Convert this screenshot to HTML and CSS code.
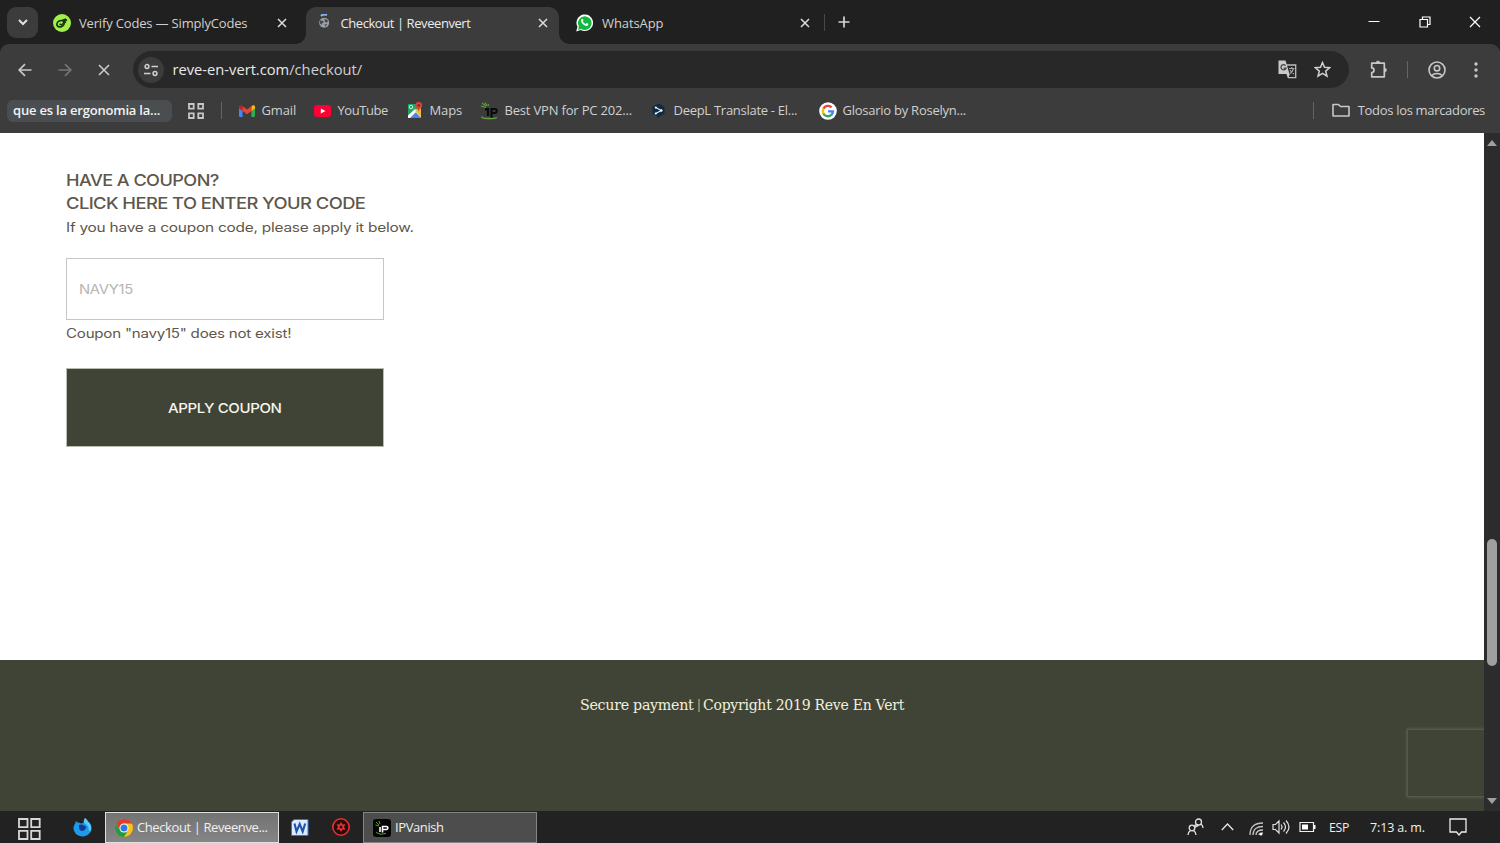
FILE: index.html
```
<!DOCTYPE html>
<html lang="es">
<head>
  <meta charset="UTF-8">
  <title>Checkout | Reveenvert</title>
  <link rel="stylesheet" href="styles.css">
</head>
<body>
  <div class="screen">

    <div class="tab-strip">
      <button class="tab-search">
        <svg width="12" height="12" viewBox="0 0 12 12"><path d="M2 4l4 4 4-4" fill="none" stroke="#e3e3e3" stroke-width="2"/></svg>
      </button>
      <div class="tab">
        <svg class="tab-icon" viewBox="0 0 18 18"><circle cx="9" cy="9" r="9" fill="#a4f04b"/><ellipse cx="7.5" cy="9.8" rx="3.8" ry="3" transform="rotate(-25 7.5 9.8)" fill="none" stroke="#17330d" stroke-width="1.7"/><path d="M6.5 10l2 1L14 5.5M9 6.5l4-1.5M10 9l3-1" fill="none" stroke="#17330d" stroke-width="1.4"/></svg>
        <span class="tab-title"><span class="t-verify">Verify Codes — SimplyCodes</span></span>
        <svg class="tab-close" viewBox="0 0 10 10"><path d="M1 1l8 8M9 1l-8 8"/></svg>
      </div>
      <div class="tab active">
        <svg class="tab-icon" viewBox="0 0 18 18"><path d="M5.8 1.800Q9-.3 12 1" fill="none" stroke="#8ab4f8" stroke-width="2"/><circle cx="9.200" cy="8.700" r="5" fill="#9aa0a6"/><path d="M5 6.500l3 .2.7 1.700-2 1 .3 1.600-2-1.600zM9.500 4.500l3.500 2-1 2.200-2.200-1zM9.300 10.500l3-.6-1.800 2.700z" fill="#45494d"/></svg>
        <span class="tab-title"><span class="t-checkout">Checkout | Reveenvert</span></span>
        <svg class="tab-close" viewBox="0 0 10 10"><path d="M1 1l8 8M9 1l-8 8"/></svg>
      </div>
      <div class="tab">
        <svg class="tab-icon" viewBox="0 0 18 18"><path d="M.2 17.500L1.500 12.800A8.300 8.300 0 1 1 4.700 16z" fill="#fff"/><path d="M2 15.700l.9-3.100A6.800 6.800 0 1 1 5.300 15z" fill="#12b83f"/><path d="M5.500 5.200c.5-.7 1.200-.7 1.500 0l.5 1.300-.7 1c.7 1.300 1.600 2 2.800 2.500l.9-1 1.700.8c.4.3 0 1.500-.7 1.900-1.200.6-3 0-4.700-1.700C5.100 8.200 4.700 6.500 5.500 5.200z" fill="#fff"/></svg>
        <span class="tab-title"><span class="t-whats">WhatsApp</span></span>
        <svg class="tab-close" viewBox="0 0 10 10"><path d="M1 1l8 8M9 1l-8 8"/></svg>
      </div>
      <span class="tab-divider"></span>
      <svg class="new-tab" width="12" height="12" viewBox="0 0 12 12"><path d="M6 .5v11M.5 6h11" stroke="#d5d5d5" stroke-width="1.7"/></svg>
      <div class="window-buttons">
        <svg width="12" height="12" viewBox="0 0 12 12"><path d="M.5 5.500h11" stroke="#fff"/></svg>
        <svg width="12" height="12" viewBox="0 0 12 12"><path d="M1 3.500h7.500V11H1zM3.500 3V1H11v7.500H9" fill="none" stroke="#fff" stroke-width="1.200"/></svg>
        <svg width="12" height="12" viewBox="0 0 12 12"><path d="M1 1l10 10M11 1L1 11" stroke="#fff" stroke-width="1.200"/></svg>
      </div>
    </div>

    <div class="chrome-bars">
      <div class="toolbar">
        <svg class="nav-icon" viewBox="0 0 14 14"><path d="M13.500 7H1.500M7 1.200L1.200 7 7 12.800" stroke="#c7c7c7"/></svg>
        <svg class="nav-icon" viewBox="0 0 14 14"><path d="M.5 7h12M7 1.200L12.800 7 7 12.800" stroke="#757575"/></svg>
        <svg class="nav-icon" viewBox="0 0 14 14"><path d="M2 2l10 10M12 2L2 12" stroke="#c7c7c7"/></svg>
        <div class="address-bar">
          <span class="site-info">
            <svg width="16" height="16" viewBox="0 0 16 16"><path d="M8.500 4.500H15M1 11.500h6.500" stroke="#d0d0d0" stroke-width="1.600"/><circle cx="4" cy="4.500" r="1.900" fill="none" stroke="#d0d0d0" stroke-width="1.500"/><circle cx="12" cy="11.500" r="1.900" fill="none" stroke="#d0d0d0" stroke-width="1.500"/></svg>
          </span>
          <span class="url">reve-en-vert.com<span class="path">/checkout/</span></span>
          <svg class="translate" width="19" height="19" viewBox="0 0 19 19"><path d="M8 5h9.700v12.700H10.500L9 14" fill="none" stroke="#bdbdbd" stroke-width="1.300"/><path d="M.5.500h7l4 13.500h-11z" fill="#c9c9c9"/><path d="M9 14h3l-2 4z" fill="#c9c9c9"/><path d="M7.600 5.600A2.600 2.600 0 1 0 8 8.200H5.700" fill="none" stroke="#444" stroke-width="1.300"/><path d="M11 8.500h5.500M13.700 7v1.500M15.500 8.500c-.5 2-2 4-3.500 5M12 10c1 2 2.500 3 4 4" fill="none" stroke="#aaa" stroke-width="1.100"/></svg>
          <svg width="17" height="17" viewBox="0 0 17 17"><path d="M8.500 1.500l2 4.800 5.200.4-4 3.400 1.300 5.100-4.500-2.800L4 15.200l1.300-5.100-4-3.400 5.200-.4z" fill="none" stroke="#d0d0d0" stroke-width="1.500"/></svg>
        </div>
        <svg class="puzzle" width="18" height="19" viewBox="0 0 18 19"><path d="M1.700 3.200h12.600v13.600H1.700v-4.300a2.200 2.200 0 0 0 0-4.600z" fill="none" stroke="#c7c7c7" stroke-width="1.700" stroke-linejoin="round"/><path d="M6 3a2 2 0 0 1 4 0zM14.500 8a2 2 0 0 1 0 4z" fill="#c7c7c7" stroke="#c7c7c7" stroke-width=".6"/></svg>
        <span class="divider"></span>
        <svg class="profile" width="18" height="18" viewBox="0 0 18 18" fill="none" stroke="#c7c7c7" stroke-width="1.600"><circle cx="9" cy="9" r="8"/><circle cx="9" cy="7.200" r="2.700"/><path d="M3.600 14.500c3-2.700 7.800-2.700 10.800 0"/></svg>
        <svg class="menu-dots" width="4" height="16" viewBox="0 0 4 16" fill="#c7c7c7"><circle cx="2" cy="2" r="1.700"/><circle cx="2" cy="8" r="1.700"/><circle cx="2" cy="14" r="1.700"/></svg>
      </div>

      <div class="bookmarks">
        <span class="group-chip"><span class="t-group">que es la ergonomia la...</span></span>
        <svg class="apps" width="16" height="16" viewBox="0 0 16 16" fill="none" stroke="#c7c7c7" stroke-width="1.800"><path d="M1 1h4.700v4.700H1zM10.300 1H15v4.700h-4.700zM1 10.300h4.700V15H1zM10.300 10.300H15V15h-4.700z"/></svg>
        <span class="divider first"></span>
        <div class="bookmark b-gmail">
          <svg width="16" height="12" viewBox="0 0 16 12"><path d="M0 1.500L3.600 4v8H1.200Q0 12 0 11z" fill="#4285f4"/><path d="M12.400 4L16 1.500V11q0 1-1.200 1h-2.400z" fill="#34a853"/><path d="M12.400 1.200Q14 0 15.300.4 16 .7 16 2v1.500L12.400 6z" fill="#fbbc04"/><path d="M0 2Q0 .6.900.3 2 0 3.600 1.200V6L0 3.500z" fill="#c5221f"/><path d="M3.600 1.200L8 4.500l4.400-3.300V6L8 9.200 3.600 6z" fill="#ea4335"/></svg>
          <span>Gmail</span>
        </div>
        <div class="bookmark b-youtube">
          <svg width="17" height="12" viewBox="0 0 17 12"><rect width="17" height="12" rx="3" fill="#ff0033"/><path d="M6.800 3.500L11.500 6 6.800 8.500z" fill="#fff"/></svg>
          <span>YouTube</span>
        </div>
        <div class="bookmark b-maps">
          <svg width="16" height="17" viewBox="0 0 16 17"><rect x="1" y="2" width="13" height="14" rx="1" fill="#e6e9ea"/><path d="M1 2h10L1 13z" fill="#1fa463"/><path d="M1 15.500L7.500 9l6.500 7H1z" fill="#4c83e8"/><path d="M1 12.500L11 2l2 2L2 15H1z" fill="#1fa463"/><path d="M1 13.500L8 7l2 2L3 16H1z" fill="#fff"/><path d="M14 6v9L8 9z" fill="#e8bd3b"/><circle cx="4" cy="5" r="1.700" fill="none" stroke="#fff" stroke-width=".8"/><path d="M11.700 0a3.400 3.400 0 0 1 3.400 3.400c0 2.200-2.600 3.200-3.400 6-.8-2.800-3.400-3.800-3.400-6A3.400 3.400 0 0 1 11.700 0z" fill="#db4437"/><circle cx="11.700" cy="3.400" r="1.200" fill="#7b231c"/></svg>
          <span>Maps</span>
        </div>
        <div class="bookmark b-vpn">
          <svg width="17" height="18" viewBox="0 0 17 18"><path d="M1 1l4 3M4 .5l2 3M0 4l5 1.500M7.500 2l-.5 2" stroke="#5d9d38" stroke-width="1.200"/><path d="M7 7v7M10.500 15.500V7H14q2 0 1.700 2.500-.3 1.500-2 1.500h-3" fill="none" stroke="#090b09" stroke-width="2.200"/><path d="M4 6h4v2.500H4z" fill="#090b09"/><path d="M.5 14.500q.8 2.200 7 2 6 .5 8.500-1" fill="none" stroke="#65a243" stroke-width="1.300"/></svg>
          <span>Best VPN for PC 202...</span>
        </div>
        <div class="bookmark b-deepl">
          <svg width="13" height="16" viewBox="0 0 13 16"><path d="M6.500.5l6 3.300v7L6.500 14v2L4.800 13 .5 10.800v-7z" fill="#0f2b46"/><path d="M3.700 4.500l5.600 3-5.600 3" fill="none" stroke="#e8edf0" stroke-width="1.100"/><circle cx="3.800" cy="4.500" r="1.100" fill="#fff"/><circle cx="9.300" cy="7.500" r="1.200" fill="#fff"/><circle cx="3.800" cy="10.500" r="1.100" fill="#fff"/></svg>
          <span>DeepL Translate - El...</span>
        </div>
        <div class="bookmark b-google">
          <svg width="18" height="18" viewBox="0 0 18 18"><circle cx="9" cy="9" r="8.800" fill="#fff"/><g fill="none" stroke-width="2.300"><path d="M12.600 5.300A5.200 5.200 0 0 0 4.400 6.600" stroke="#ea4335"/><path d="M4.400 6.500a5.300 5.300 0 0 0 0 5" stroke="#fbbc05"/><path d="M4.300 11.400a5.200 5.200 0 0 0 8.100 1.500" stroke="#34a853"/><path d="M12.200 13A5 5 0 0 0 14 9.300H9" stroke="#4285f4"/></g></svg>
          <span>Glosario by Roselyn...</span>
        </div>
        <div class="all-bookmarks">
          <span class="divider"></span>
          <svg width="18" height="15" viewBox="0 0 18 15"><path d="M1 1.500h5.500l2 2H17V13H1z" fill="none" stroke="#c7c7c7" stroke-width="1.600" stroke-linejoin="round"/></svg>
          <span class="t-all">Todos los marcadores</span>
        </div>
      </div>
    </div>

    <div class="viewport">
      <div class="page">
        <div class="coupon">
          <h3><span class="t-have">HAVE A COUPON?</span></h3>
          <h3><span class="t-click">CLICK HERE TO ENTER YOUR CODE</span></h3>
          <p class="hint"><span class="t-hint">If you have a coupon code, please apply it below.</span></p>
          <div class="coupon-input"><span class="t-navy">NAVY15</span></div>
          <p class="error"><span class="t-error">Coupon "navy15" does not exist!</span></p>
          <button class="apply"><span class="t-apply">APPLY COUPON</span></button>
        </div>
        <footer class="footer">
          <p><span class="t-secure">Secure payment</span><span class="bar"></span><span class="t-copy">Copyright 2019 Reve En Vert</span></p>
          <div class="recaptcha"></div>
        </footer>
      </div>
      <div class="scrollbar">
        <span class="arrow up"></span>
        <span class="thumb"></span>
        <span class="arrow down"></span>
      </div>
    </div>

    <div class="taskbar">
      <svg class="start" width="23" height="22" viewBox="0 0 23 22" fill="none" stroke="#d8d8d8" stroke-width="1.800"><path d="M1 1h8.500v8.200H1zM13.200 1h8.500v8.200h-8.500zM1 12.800h8.500V21H1zM13.200 12.800h8.500V21h-8.500z"/></svg>
      <svg class="firefox" width="19" height="19" viewBox="0 0 19 19"><path d="M12 0q2 1 3 3.500 3.800 3 3.500 7.500A9 8.300 0 1 1 2.500 5l.3-2 2 1.500q2 0 3 1l2.700-.5q-.3-3 1.500-5z" fill="#1b9bea"/><path d="M12 0q2 1 3 3.500 4 3.500 3 8-1 2-2 1.500 0-6-5-8-.5-3 1-5z" fill="#5bcaf8"/><path d="M6 7q3-1 5 .5l2.500 1.500q-1 3-4 4-4 0-3.500-6z" fill="#143b92"/></svg>
      <div class="task current">
        <svg width="18" height="18" viewBox="0 0 18 18"><circle cx="9" cy="9" r="9" fill="#fbc116"/><path d="M1.200 4.500A9 9 0 0 1 16.800 4.500H9L5.100 11.300z" fill="#e33b2e"/><path d="M1.200 4.500A9 9 0 0 0 9 18l4-6.800H5.100z" fill="#229b49"/><circle cx="9" cy="9" r="4.500" fill="#fff"/><circle cx="9" cy="9" r="3.500" fill="#3478df"/></svg>
        <span class="t-task">Checkout | Reveenve...</span>
      </div>
      <svg class="word" width="18" height="17" viewBox="0 0 18 17"><path d="M3 .5h14v16H.5V3z" fill="#dceaff" stroke="#3974c8"/><path d="M3.500 4.500l2 8L8.700 5l3 7.500 2.500-8" fill="none" stroke="#1b55b0" stroke-width="2.100"/></svg>
      <svg class="recorder" width="18" height="18" viewBox="0 0 18 18"><circle cx="9" cy="9" r="8.200" fill="#260e0e" stroke="#ea3030" stroke-width="1.600"/><path d="M9 4l1.500 2.400 2.900-.1L12 9l1.400 2.700-2.900-.1L9 14l-1.500-2.400-2.900.1L6 9 4.600 6.300l2.900.1z" fill="#ee3030"/><circle cx="9" cy="9" r="1.500" fill="#260e0e"/></svg>
      <div class="task">
        <svg width="18" height="18" viewBox="0 0 18 18"><rect width="18" height="18" rx="3" fill="#050505"/><path d="M3 3l3 3M6 2l1 3M2.500 6L6 7" stroke="#5d9d38"/><path d="M7 8v5M9.500 13.500v-6h4q1.500 0 1.300 1.600-.2 1.400-1.500 1.400H10" fill="none" stroke="#fff" stroke-width="1.600"/><path d="M3 13.500q5 3 10 1" fill="none" stroke="#579d36"/></svg>
        <span class="t-vanish">IPVanish</span>
      </div>
      <div class="tray">
        <svg class="people" width="17" height="18" viewBox="0 0 17 18" fill="none" stroke="#e3e3e3" stroke-width="1.300"><circle cx="11.500" cy="4" r="3"/><path d="M9 6.500L7.500 8M14 6q2 1.500 2 4"/><circle cx="5" cy="10" r="2.800"/><path d="M1 17q0-3 2.500-4.500M9 17q0-3-2.500-4.500M11.500 7.500Q9 8 8 9.500"/></svg>
        <svg class="caret" width="13" height="8" viewBox="0 0 13 8"><path d="M.8 7l5.700-6 5.700 6" fill="none" stroke="#e8e8e8" stroke-width="1.300"/></svg>
        <svg class="wifi" width="15" height="14" viewBox="0 0 15 14" fill="none" stroke="#c4c4c4" stroke-width="1.300"><path d="M1 13Q1 1 14 1M4 13Q4 4.500 14 4.500M7 13q0-5 7-5M10 13q0-2 4-2"/><circle cx="12" cy="12.300" r="1.300" fill="#fff" stroke="none"/></svg>
        <svg class="volume" width="19" height="16" viewBox="0 0 19 16" fill="none" stroke="#e0e0e0" stroke-width="1.200"><path d="M1 5.500h2.500L7 2v12l-3.500-3.500H1zM9 5.500q2 2.500 0 5M11.500 3.500q4 4.500 0 9M14 1.500q6 6.500 0 13"/></svg>
        <svg class="battery" width="17" height="12" viewBox="0 0 17 12"><path d="M1 1.500h13.500v9H1z" fill="none" stroke="#eee" stroke-width="1.200"/><path d="M3 3.500h6v5H3zM15 4h1.500v4H15z" fill="#fff"/></svg>
        <span class="t-esp">ESP</span>
        <span class="t-time">7:13 a. m.</span>
        <svg class="notice" width="18" height="18" viewBox="0 0 18 18"><path d="M1 1h16v13h-4.500L10 17l-2.500-3H1z" fill="none" stroke="#eee" stroke-width="1.300"/></svg>
      </div>
    </div>

  </div>
</body>
</html>
```
FILE: styles.css
```
* {
  margin: 0;
  padding: 0;
  box-sizing: border-box;
}

body {
  font-family: "Open Sans", "Noto Sans", sans-serif;
  font-size: 13px;
  color: #d0d0d0;
  background: #202020;
}

svg {
  display: block;
  flex-shrink: 0;
}

button {
  border: none;
  font: inherit;
}

.screen {
  display: flex;
  flex-direction: column;
  width: 1500px;
  height: 843px;
  overflow: hidden;
  white-space: nowrap;
}

/* tabs */
.tab-strip {
  display: flex;
  align-items: center;
  height: 44px;
  padding-left: 7px;
  background: #202020;
}

.tab-search {
  display: flex;
  align-items: center;
  justify-content: center;
  width: 31px;
  height: 31px;
  margin-right: 6px;
  border-radius: 9px;
  background: #3c3c3c;
}

.tab {
  position: relative;
  display: flex;
  align-items: center;
  width: 253.5px;
  height: 37px;
  margin-top: 7px;
  margin-right: 8px;
  padding: 0 11px 6px 9px;
}

.tab.active {
  border-radius: 10px 10px 0 0;
  background: #3c3c3c;
}

/* flared feet of the active tab */
.tab.active::before,
.tab.active::after {
  content: "";
  position: absolute;
  bottom: 0;
  width: 10px;
  height: 10px;
}

.tab.active::before {
  left: -10px;
  background: radial-gradient(circle at 0 0, transparent 9.5px, #3c3c3c 10px);
}

.tab.active::after {
  right: -10px;
  background: radial-gradient(circle at 100% 0, transparent 9.5px, #3c3c3c 10px);
}

.tab-icon {
  width: 18px;
  height: 18px;
}

.tab-title {
  flex: 1;
  margin-left: 8px;
}

.tab.active .tab-title {
  color: #ececec;
}

.t-verify {
  letter-spacing: -0.17px;
}

.t-checkout {
  letter-spacing: -0.43px;
}

.t-whats {
  letter-spacing: -0.1px;
}

.tab-close {
  width: 10px;
  height: 10px;
  fill: none;
  stroke: #dedede;
  stroke-width: 1.5;
}

.tab-divider {
  width: 1px;
  height: 17px;
  margin-left: -5px;
  background: #494949;
}

.new-tab {
  margin-left: 13px;
}

.window-buttons {
  display: flex;
  gap: 38.5px;
  margin-left: auto;
  margin-right: 19px;
}

/* toolbar */
.chrome-bars {
  height: 89px;
  border-radius: 9px 9px 0 0;
  background: #3c3c3c;
}

.toolbar {
  display: flex;
  align-items: center;
  height: 51px;
  padding-left: 18px;
}

.nav-icon {
  width: 14px;
  height: 14px;
  margin-right: 25.5px;
  fill: none;
  stroke-width: 1.7;
}

.address-bar {
  display: flex;
  align-items: center;
  width: 1216px;
  height: 37px;
  margin-left: -4px;
  padding: 0 18px 0 5px;
  border-radius: 19px;
  background: #282828;
}

.site-info {
  display: flex;
  align-items: center;
  justify-content: center;
  width: 26px;
  height: 26px;
  border-radius: 50%;
  background: #3c3c3c;
}

.url {
  flex: 1;
  margin-left: 9px;
  padding-bottom: 2px;
  color: #e8e8e8;
  font-size: 14.7px;
}

.path {
  color: #cfcfcf;
}

.translate {
  margin-right: 17px;
}

.puzzle {
  margin-left: 21px;
}

.divider {
  width: 1px;
  height: 17px;
  background: #656565;
}

.toolbar .divider {
  margin-left: 19px;
}

.profile {
  margin-left: 20px;
}

.menu-dots {
  margin-left: 28px;
}

/* bookmarks */
.bookmarks {
  display: flex;
  align-items: center;
  height: 31px;
  padding: 0 15px 0 7px;
}

.group-chip {
  width: 165px;
  height: 22px;
  padding-left: 6px;
  border-radius: 6px;
  background: #4b4e50;
  color: #f2f2f2;
  font-weight: 600;
  line-height: 20px;
}

.t-group {
  letter-spacing: -0.2px;
}

.apps {
  margin-left: 16px;
}

.divider.first {
  margin-left: 17px;
}

.bookmark {
  display: flex;
  align-items: center;
  gap: 7px;
}

.bookmark span,
.t-all {
  padding-bottom: 2px;
}

.b-gmail {
  width: 75px;
  margin-left: 16.5px;
  letter-spacing: -0.15px;
}

.b-youtube {
  width: 93px;
  letter-spacing: -0.45px;
}

.b-maps {
  width: 74px;
  letter-spacing: -0.1px;
}

.b-vpn {
  width: 171px;
  letter-spacing: -0.18px;
}

.b-deepl {
  width: 167px;
  gap: 9px;
  letter-spacing: -0.28px;
}

.b-google {
  gap: 6px;
  letter-spacing: -0.25px;
}

.all-bookmarks {
  display: flex;
  align-items: center;
  margin-left: auto;
}

.all-bookmarks svg {
  margin: 0 8px 0 18px;
}

.t-all {
  letter-spacing: -0.32px;
}

/* web page */
.viewport {
  display: flex;
  height: 678px;
}

.page {
  display: flex;
  flex-direction: column;
  width: 1484px;
  overflow: hidden;
  background: #fff;
}

.coupon {
  height: 527px;
  padding: 35px 0 0 66px;
  color: #5f574b;
  font-family: Inter, sans-serif;
}

.coupon span,
.footer p span {
  display: inline-block;
  transform-origin: left center;
}

.coupon h3 {
  height: 23px;
  font-size: 16px;
  font-weight: 500;
  line-height: 24px;
  letter-spacing: -0.5px;
}

.coupon .t-have {
  transform: scaleX(1.133);
}

.coupon .t-click {
  transform: scaleX(1.147);
}

.hint,
.error {
  height: 20px;
  font-size: 12.5px;
  line-height: 20px;
  letter-spacing: -0.2px;
}

.hint {
  margin-top: 4px;
}

.coupon .t-hint {
  transform: scaleX(1.236);
}

.coupon-input {
  width: 318px;
  height: 62px;
  margin-top: 20px;
  padding-left: 12px;
  border: 1px solid #c6c6c6;
  color: #b8b5b0;
  font-size: 13.5px;
  line-height: 60px;
  letter-spacing: -0.3px;
}

.coupon .t-navy {
  transform: scaleX(1.1);
}

.error {
  margin-top: 4px;
}

.coupon .t-error {
  transform: scaleX(1.21);
}

.apply {
  display: block;
  width: 318px;
  height: 79px;
  margin-top: 24px;
  padding: 0 0 0 101px;
  border: 1px solid #b9bbb5;
  background: #404436;
  color: #f5f5ec;
  font-family: Inter, sans-serif;
  font-size: 13.5px;
  font-weight: 500;
  letter-spacing: -0.35px;
  text-align: left;
}

.coupon .t-apply {
  transform: scaleX(1.112);
}

.footer {
  height: 151px;
  padding-top: 34px;
  background: #404436;
  color: #f1f0df;
  font-family: "DejaVu Serif", serif;
  font-size: 14.5px;
  letter-spacing: -0.3px;
}

.footer p {
  display: flex;
  align-items: center;
  height: 22px;
  padding-left: 580px;
}

.t-secure {
  width: 114px;
}

.footer .t-secure {
  transform: scaleX(0.983);
}

.footer .t-copy {
  transform: scaleX(0.97);
}

.bar {
  width: 2px;
  height: 13px;
  margin: 0 3px 0 4px;
  background: #718a62;
}

.recaptcha {
  width: 77px;
  height: 68px;
  margin: 13px 0 0 auto;
  border: 1px solid #555b4c;
  border-right: none;
  box-shadow: 0 0 3px #64685b;
}

.scrollbar {
  display: flex;
  flex-direction: column;
  align-items: center;
  width: 16px;
  padding: 7px 0;
  background: #2c2c2c;
}

.arrow {
  border: 5px solid transparent;
}

.arrow.up {
  border-top: none;
  border-bottom: 6px solid #a0a0a0;
}

.arrow.down {
  margin-top: auto;
  border-bottom: none;
  border-top: 6px solid #a0a0a0;
}

.thumb {
  width: 10px;
  height: 127px;
  margin-top: 393px;
  border-radius: 5px;
  background: #9f9f9f;
}

/* taskbar */
.taskbar {
  display: flex;
  align-items: center;
  height: 32px;
  padding-left: 18px;
  background: #222;
  color: #f0f0f0;
}

.start {
  margin-top: 3px;
}

.firefox {
  margin: 0 13px 0 32px;
}

.task {
  display: flex;
  align-items: center;
  gap: 4px;
  width: 174px;
  height: 31px;
  margin-top: 1px;
  padding-left: 9px;
  border: 1px solid #858585;
  background: #4d4d4d;
}

.task span {
  padding-bottom: 2px;
  letter-spacing: -0.4px;
}

.task.current {
  border-color: #e0e0e0;
  background: linear-gradient(#737373, #858585);
}

.word {
  margin: 0 23px 0 12px;
}

.recorder {
  margin-right: 13px;
}

.tray {
  display: flex;
  align-items: center;
  margin-left: auto;
  margin-right: 33px;
}

.caret {
  margin-left: 17px;
}

.wifi {
  margin: 3px 0 0 15px;
}

.volume {
  margin-left: 8px;
}

.battery {
  margin-left: 8px;
}

.t-esp {
  width: 21px;
  margin-left: 13px;
  font-size: 12.3px;
  letter-spacing: -0.3px;
}

.t-time {
  width: 56px;
  margin-left: 20px;
  font-size: 12.5px;
  letter-spacing: -0.15px;
}

.notice {
  margin-left: 23px;
}
```
